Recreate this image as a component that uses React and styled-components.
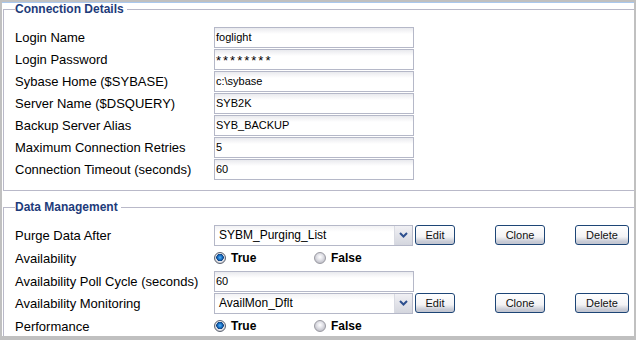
import React from "react";
import styled, { createGlobalStyle } from "styled-components";

const GlobalStyle = createGlobalStyle`
  body {
    margin: 0;
    background: #ffffff;
    font-family: "Liberation Sans", Arial, sans-serif;
  }
`;

const Frame = styled.div`
  width: 636px;
  height: 340px;
  box-sizing: border-box;
  border-style: solid;
  border-color: #c0c0c0;
  border-width: 2px 2px 4px 2px;
  box-shadow: inset 0 1px 0 #a9c8ee;
  background: #ffffff;
  overflow: hidden;
`;

const Section = styled.fieldset`
  margin: ${(p) => p.$top}px 0 0 1px;
  padding: ${(p) => p.$padTop}px 0 ${(p) => p.$padBottom}px 11px;
  border: 1px solid #b9b9c9;
  border-right: none;
  min-inline-size: 0;
`;

const Legend = styled.legend`
  padding: 0 3px 0 0;
  margin-left: 0;
  font-size: 12px;
  line-height: 14px;
  font-weight: bold;
  color: #1d3b7a;
`;

const Row = styled.div`
  display: grid;
  grid-template-columns: 199px 1fr;
  align-items: center;
  height: ${(p) => p.$h || 22}px;
`;

const Label = styled.div`
  font-size: 13px;
  color: #000;
  white-space: nowrap;
`;

const TextBox = styled.div`
  width: 200px;
  height: 21px;
  box-sizing: border-box;
  border: 1px solid #b5b8c8;
  background: linear-gradient(#e9eaee 0, #ffffff 6px);
  font-size: ${(p) => (p.$secret ? 13 : 11)}px;
  letter-spacing: ${(p) => (p.$secret ? 2 : 0)}px;
  line-height: ${(p) => (p.$secret ? 22 : 19)}px;
  padding-left: 1px;
  color: #000;
`;

const Controls = styled.div`
  display: flex;
  align-items: center;
`;

const Select = styled.div`
  width: 199px;
  height: 21px;
  box-sizing: border-box;
  border: 1px solid #b5b8c8;
  display: flex;
  background: linear-gradient(#f2f2f4 0, #ffffff 6px);
`;

const SelectText = styled.div`
  flex: 1;
  font-size: 12px;
  line-height: 19px;
  padding-left: 4px;
  color: #000;
`;

const Arrow = styled.div`
  width: 17px;
  display: flex;
  align-items: center;
  justify-content: center;
  border-left: 1px solid #d8dae2;
  background: linear-gradient(#f0f0f4, #d4d6de);
`;

const Button = styled.div`
  width: ${(p) => p.$w}px;
  margin-left: ${(p) => p.$ml}px;
  height: 20px;
  box-sizing: border-box;
  border: 1px solid #1d4576;
  border-radius: 3px;
  background: linear-gradient(#ffffff 0, #f3f3f5 60%, #c9ccd6 85%, #c2c5d0 100%);
  font-size: 11px;
  line-height: 18px;
  text-align: center;
  color: #111;
`;

const RadioGroup = styled.div`
  display: flex;
  align-items: center;
`;

const RadioItem = styled.div`
  display: flex;
  align-items: center;
  width: 100px;
  font-size: 12px;
  font-weight: bold;
  color: #000;
`;

const Dot = styled.span`
  width: 12px;
  height: 12px;
  box-sizing: border-box;
  border-radius: 50%;
  border: 1px solid ${(p) => (p.$on ? "#5a6270" : "#9a9aa2")};
  background: ${(p) =>
    p.$on
      ? "radial-gradient(circle at 50% 45%, #4fb6ff 0, #1565b8 2.5px, #0d3f7a 3.5px, #e9e9ee 4px, #c4c4cc 6px)"
      : "radial-gradient(circle at 50% 40%, #ffffff 0, #e2e2e8 3px, #c0c0c8 6px)"};
  margin-right: 5px;
`;

const Chevron = () => (
  <svg width="9" height="6" viewBox="0 0 9 6">
    <path d="M1 1 L4.5 4.5 L8 1" fill="none" stroke="#2d4f8e" strokeWidth="2" />
  </svg>
);

const Radio = ({ value }) => (
  <RadioGroup>
    <RadioItem>
      <Dot $on={value} />
      True
    </RadioItem>
    <RadioItem>
      <Dot $on={!value} />
      False
    </RadioItem>
  </RadioGroup>
);

const Dropdown = ({ text }) => (
  <Controls>
    <Select>
      <SelectText>{text}</SelectText>
      <Arrow>
        <Chevron />
      </Arrow>
    </Select>
    <Button $w={40} $ml={2}>Edit</Button>
    <Button $w={50} $ml={40}>Clone</Button>
    <Button $w={54} $ml={30}>Delete</Button>
  </Controls>
);

const connection = [
  ["Login Name", "foglight"],
  ["Login Password", "********", true],
  ["Sybase Home ($SYBASE)", "c:\\sybase"],
  ["Server Name ($DSQUERY)", "SYB2K"],
  ["Backup Server Alias", "SYB_BACKUP"],
  ["Maximum Connection Retries", "5"],
  ["Connection Timeout (seconds)", "60"],
];

export default function App() {
  return (
    <>
      <GlobalStyle />
      <Frame>
        <Section $top={0} $padTop={10} $padBottom={10}>
          <Legend>Connection Details</Legend>
          {connection.map(([label, value, secret]) => (
            <Row key={label}>
              <Label>{label}</Label>
              <TextBox $secret={secret}>{value}</TextBox>
            </Row>
          ))}
        </Section>
        <Section $top={9} $padTop={10} $padBottom={10}>
          <Legend>Data Management</Legend>
          <Row>
            <Label>Purge Data After</Label>
            <Dropdown text="SYBM_Purging_List" />
          </Row>
          <Row $h={24}>
            <Label>Availability</Label>
            <Radio value={true} />
          </Row>
          <Row>
            <Label>Availability Poll Cycle (seconds)</Label>
            <TextBox>60</TextBox>
          </Row>
          <Row>
            <Label>Availability Monitoring</Label>
            <Dropdown text="AvailMon_Dflt" />
          </Row>
          <Row $h={24}>
            <Label>Performance</Label>
            <Radio value={true} />
          </Row>
        </Section>
      </Frame>
    </>
  );
}
